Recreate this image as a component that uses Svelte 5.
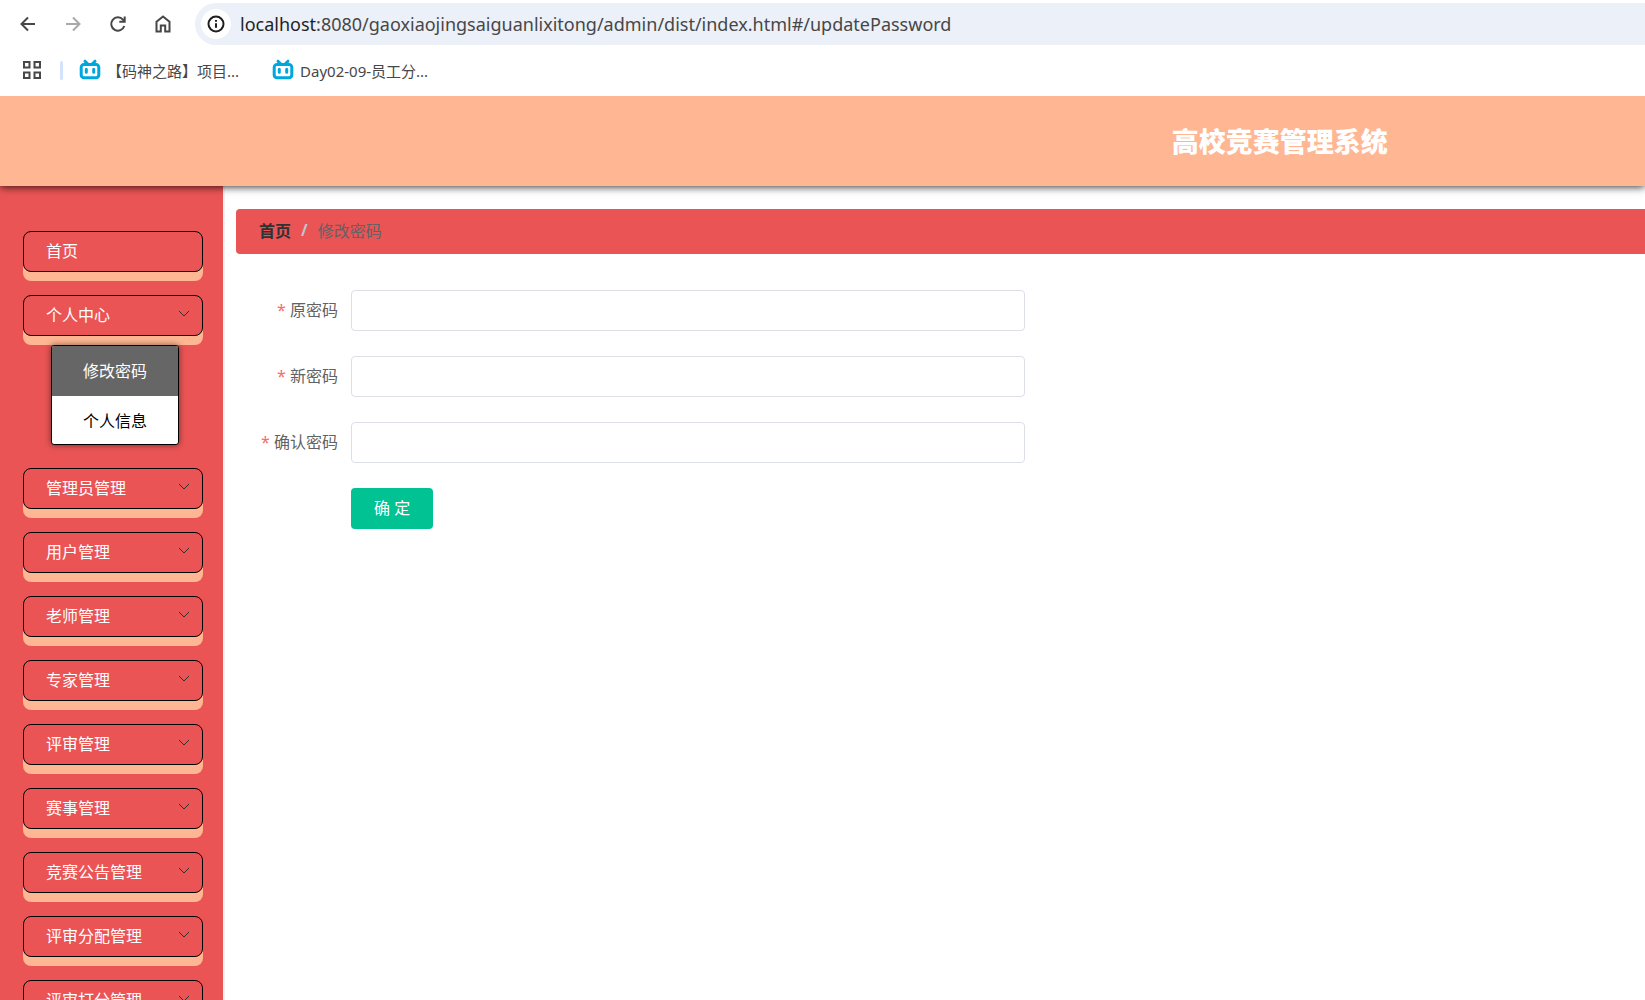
<script lang="ts">
    interface MenuItem {
        name: string;
        children?: string[];
    }

    const path = ':8080/gaoxiaojingsaiguanlixitong/admin/dist/index.html#/updatePassword';

    const bookmarks = ['【码神之路】项目...', 'Day02-09-员工分...'];

    const menu: MenuItem[] = [
        { name: '个人中心', children: ['修改密码', '个人信息'] },
        { name: '管理员管理' },
        { name: '用户管理' },
        { name: '老师管理' },
        { name: '专家管理' },
        { name: '评审管理' },
        { name: '赛事管理' },
        { name: '竞赛公告管理' },
        { name: '评审分配管理' },
        { name: '评审打分管理' },
    ];

    const fields = [
        { id: 'password', label: '原密码' },
        { id: 'newpassword', label: '新密码' },
        { id: 'repassword', label: '确认密码' },
    ];

    let opened = $state('个人中心');
    let active = $state('修改密码');
    let form: Record<string, string> = $state({
        password: '',
        newpassword: '',
        repassword: '',
    });

    function toggle(name: string) {
        opened = opened === name ? '' : name;
    }

    function submit(e: SubmitEvent) {
        e.preventDefault();
    }
</script>

<div class="page">
    <div class="browser">
        <div class="toolbar">
            <button class="tool" aria-label="Back">
                <svg viewBox="0 0 20 20"><path d="M17 10H4M10 3.5 3.5 10l6.5 6.5" /></svg>
            </button>
            <button class="tool" aria-label="Forward" disabled>
                <svg viewBox="0 0 20 20"><path d="M3 10h13M10 3.5l6.5 6.5-6.5 6.5" /></svg>
            </button>
            <button class="tool" aria-label="Reload">
                <svg viewBox="0 0 20 20">
                    <path d="M16.3 12A6.7 6.7 0 1 1 15 5.600L16.500 7.400M16.700 2.500V7.800h-5.400" />
                </svg>
            </button>
            <button class="tool" aria-label="Home">
                <svg viewBox="0 0 20 20">
                    <path d="M3.500 17.500V7.800L10 2.500l6.500 5.300v9.700h-4.300v-6H7.800v6z" />
                </svg>
            </button>
            <div class="address">
                <button class="info" aria-label="Site information">
                    <svg viewBox="0 0 20 20">
                        <circle cx="10" cy="10" r="7.500" />
                        <path d="M10 9.200v4.600M10 6v1.800" />
                    </svg>
                </button>
                <label for="url">localhost</label>
                <input id="url" type="text" value={path} spellcheck="false" />
            </div>
        </div>
        <div class="bookmarks">
            <button class="apps" aria-label="Apps">
                <svg viewBox="0 0 20 20">
                    <path d="M2 2h5.500v5.500H2zM12.500 2H18v5.500h-5.500zM2 12.500h5.500V18H2zM12.500 12.500H18V18h-5.500z" />
                </svg>
            </button>
            <span class="divider"></span>
            {#each bookmarks as bookmark}
                <a class="bookmark" href="#/">
                    <svg viewBox="0 0 20 20">
                        <path d="M5 1.200 7.800 4M15 1.200 12.200 4" />
                        <rect x="1.200" y="4.400" width="17.600" height="13.400" rx="2.800" />
                        <path d="M6.300 9.300v3M13.700 9.300v3" />
                    </svg>
                    {bookmark}
                </a>
            {/each}
        </div>
    </div>

    <header>
        <h1>高校竞赛管理系统</h1>
    </header>

    <div class="body">
        <nav>
            <a class="item" href="#/">首页</a>
            {#each menu as item}
                <button class="item" onclick={() => toggle(item.name)}>
                    {item.name}
                    <svg viewBox="0 0 12 12"><path d="m1 3 5 5 5-5" /></svg>
                </button>
                {#if item.children && opened === item.name}
                    <div class="submenu">
                        {#each item.children as child}
                            <a
                                href="#/updatePassword"
                                class:active={active === child}
                                onclick={() => (active = child)}>{child}</a
                            >
                        {/each}
                    </div>
                {/if}
            {/each}
        </nav>

        <main>
            <div class="breadcrumb">
                <a href="#/">首页</a>
                <span class="separator">/</span>
                <span>修改密码</span>
            </div>

            <form onsubmit={submit}>
                {#each fields as field}
                    <div class="row">
                        <label for={field.id}><span>*</span> {field.label}</label>
                        <input id={field.id} type="password" bind:value={form[field.id]} />
                    </div>
                {/each}
                <div class="row">
                    <button class="submit" type="submit">确 定</button>
                </div>
            </form>
        </main>
    </div>
</div>

<style>
    :global(body) {
        margin: 0;
        overflow: hidden;
    }

    .page {
        height: 100vh;
        display: flex;
        flex-direction: column;
        overflow: hidden;
        background: #fff;
        font-family: 'Noto Sans', 'Noto Sans CJK SC', sans-serif;
        font-size: 16px;
    }

    .page * {
        box-sizing: border-box;
    }

    button,
    input {
        font: inherit;
    }

    button {
        padding: 0;
        border: none;
        background: none;
        cursor: pointer;
    }

    a {
        text-decoration: none;
    }

    svg {
        display: block;
        fill: none;
        stroke: currentColor;
    }

    /* keeps the header shadow from spilling upwards */
    .browser {
        position: relative;
        z-index: 2;
        flex: none;
        background: #fff;
    }

    .toolbar {
        display: flex;
        align-items: center;
        gap: 25px;
        height: 48px;
        padding-left: 18px;
    }

    .tool {
        color: #474747;
    }

    .tool:disabled {
        color: #a9a9a9;
    }

    .tool svg,
    .apps svg,
    .bookmark svg {
        width: 20px;
        height: 20px;
        stroke-width: 2;
    }

    .address {
        flex: 1;
        display: flex;
        align-items: center;
        height: 42px;
        margin-left: -3px;
        padding-left: 6px;
        border-radius: 21px 0 0 21px;
        background: #ebf0f9;
        font-size: 18px;
    }

    .info {
        display: grid;
        place-items: center;
        width: 30px;
        height: 30px;
        margin-right: 9px;
        border-radius: 50%;
        background: #fff;
        color: #1f1f1f;
    }

    .info svg {
        width: 20px;
        height: 20px;
        stroke-width: 2;
    }

    .address label {
        color: #1f1f1f;
    }

    .address input {
        flex: 1;
        min-width: 0;
        padding: 0;
        border: none;
        outline: none;
        background: none;
        color: #474747;
    }

    .bookmarks {
        display: flex;
        align-items: center;
        height: 48px;
        padding: 0 0 4px 22px;
        font-size: 15px;
    }

    .apps {
        color: #474747;
    }

    .divider {
        width: 3px;
        height: 19px;
        margin: 0 17px 0 18px;
        border-radius: 2px;
        background: #d3e3fd;
    }

    .bookmark {
        display: flex;
        align-items: center;
        gap: 7px;
        margin-right: 34px;
        color: #474747;
    }

    .bookmark svg {
        color: #00a6de;
        stroke-width: 3;
        stroke-linecap: round;
        overflow: visible;
    }

    header {
        position: relative;
        z-index: 1;
        flex: none;
        height: 90px;
        padding-left: 55.6%;
        background: #ffb693;
        box-shadow: 0 1px 8px rgba(0, 0, 0, 0.8);
    }

    h1 {
        margin: 0;
        color: #fff;
        font-size: 27px;
        font-weight: 900;
        line-height: 92px;
        text-align: center;
    }

    .body {
        flex: 1;
        display: flex;
        min-height: 0;
    }

    nav {
        flex: none;
        width: 225px;
        padding: 45px 20px 0 23px;
        overflow: hidden;
        border-right: 2px solid #f2f2f2;
        background: #ea5455;
    }

    .item {
        display: flex;
        align-items: center;
        justify-content: space-between;
        width: 180px;
        height: 41px;
        margin-bottom: 23px;
        padding: 0 12px 3px 22px;
        border: 1px solid #000;
        border-radius: 8px;
        background: #ea5455;
        box-shadow: 0 9px 0 #ffb693;
        color: #fff;
    }

    .item svg {
        width: 12px;
        height: 12px;
        color: #303133;
    }

    .submenu {
        position: relative;
        width: 128px;
        margin: -14px 0 23px 28px;
        overflow: hidden;
        border: 1px solid #000;
        border-radius: 3px;
        background: #fff;
        box-shadow: 0 0 6px rgba(0, 0, 0, 0.5);
    }

    .submenu a {
        display: block;
        height: 48px;
        color: #000;
        line-height: 50px;
        text-align: center;
    }

    .submenu .active {
        height: 50px;
        background: #666;
        color: #fff;
    }

    main {
        flex: 1;
        padding: 23px 0 0 11px;
    }

    .breadcrumb {
        display: flex;
        align-items: center;
        gap: 10px;
        height: 45px;
        padding: 0 0 3px 23px;
        border-radius: 4px 0 0 4px;
        background: #ea5455;
        color: #606266;
    }

    .breadcrumb a {
        color: #303133;
        font-weight: bold;
    }

    .separator {
        color: #c0c4cc;
        font-weight: bold;
    }

    form {
        width: 56%;
        padding-top: 36px;
    }

    .row {
        display: flex;
        margin-bottom: 25px;
        padding-left: 115px;
    }

    .row label {
        flex: none;
        width: 115px;
        margin-left: -115px;
        padding-right: 13px;
        color: #606266;
        line-height: 41px;
        text-align: right;
    }

    .row label span {
        color: #f56c6c;
    }

    .row input {
        flex: 1;
        height: 41px;
        padding: 0 15px;
        border: 1px solid #dcdfe6;
        border-radius: 4px;
        outline: none;
        color: #606266;
    }

    .submit {
        height: 41px;
        padding: 0 23px 3px;
        border-radius: 4px;
        background: #00c292;
        color: #fff;
    }
</style>
